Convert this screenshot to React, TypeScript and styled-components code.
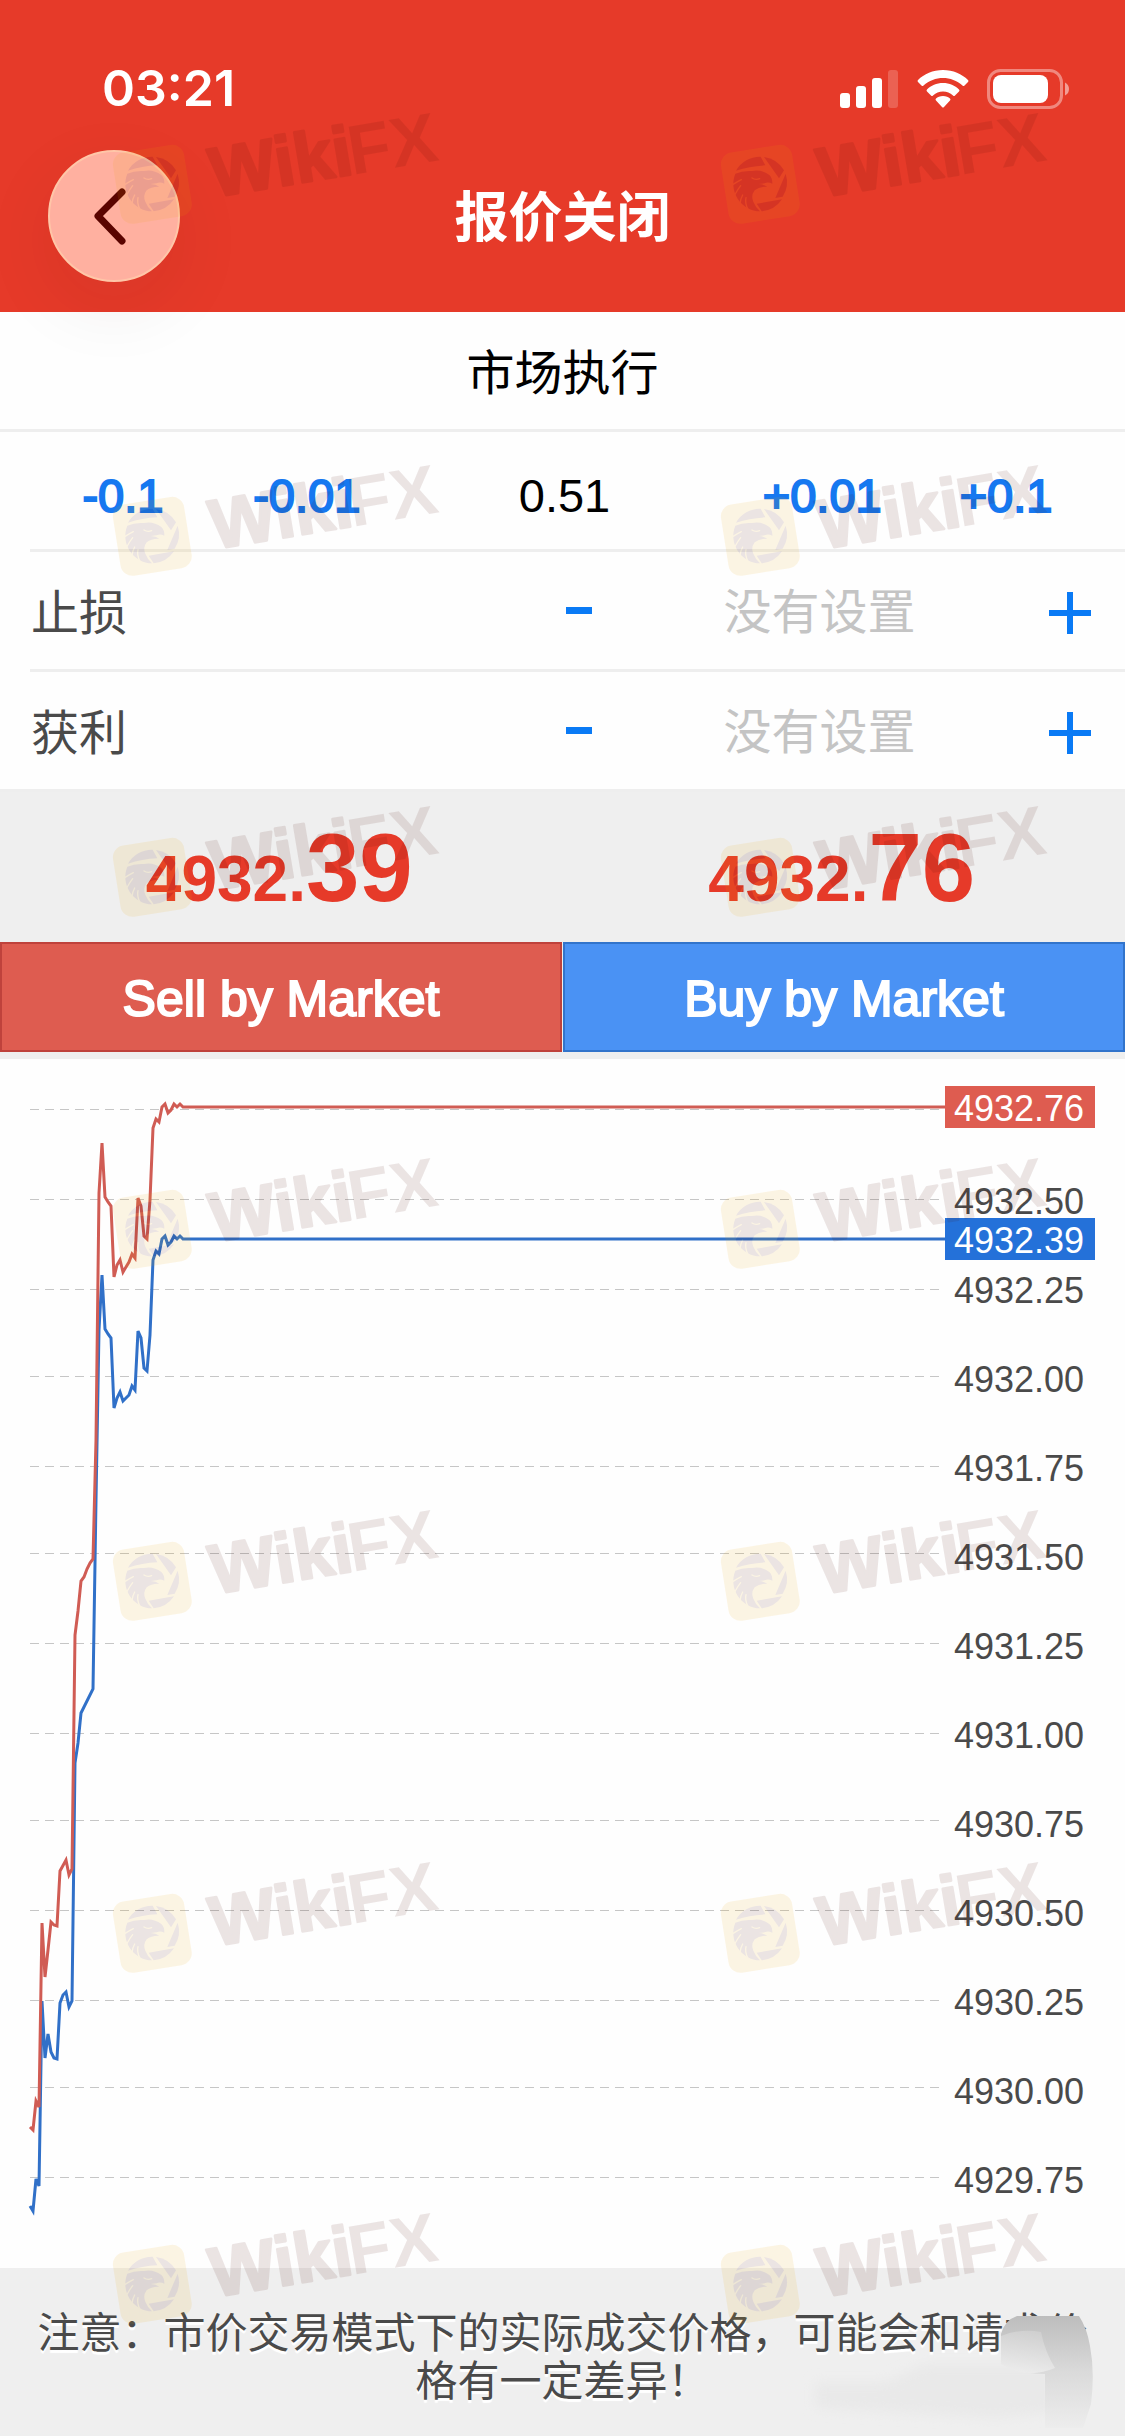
import React from "react";
import styled, { createGlobalStyle } from "styled-components";

const latin = `"Liberation Sans", "Noto Sans CJK SC", sans-serif`;
const cjk = `"Noto Sans CJK SC", "Liberation Sans", sans-serif`;

const GlobalStyle = createGlobalStyle`
  *, *::before, *::after { box-sizing: border-box; }
  body { margin: 0; background: #fefefe; }
  button, input { font: inherit; color: inherit; margin: 0; padding: 0; border: 0; background: none; }
  button { cursor: pointer; }
  input { outline: none; }
`;

const Page = styled.div`
  position: relative;
  overflow: hidden;
  width: 100%;
  display: flex;
  flex-direction: column;
  font-family: ${latin};
  color: #000;
`;

/* ---------- header ---------- */

const Header = styled.header`
  background: #e63a29;
  color: #fff;
  padding-top: 57px;
`;

const StatusBar = styled.div`
  height: 63px;
  padding: 0 54px 0 102px;
  display: flex;
  align-items: center;
  justify-content: space-between;
`;

const Clock = styled.time`
  font: 600 50px/63px Inter, sans-serif;
`;

const StatusIcons = styled.div`
  display: flex;
  align-items: center;
  gap: 18px;
`;

const NavBar = styled.nav`
  height: 192px;
  padding: 0 48px;
  display: grid;
  grid-template-columns: 1fr auto 1fr;
  align-items: center;
`;

const BackButton = styled.button`
  width: 132px;
  height: 132px;
  border-radius: 50%;
  border: 2px solid #ffc6a8;
  background: #ffb0a0;
  box-shadow: 0 24px 72px rgba(60, 30, 30, 0.08);
  display: grid;
  place-items: center;
`;

const Title = styled.h1`
  margin: 0;
  padding-bottom: 4px;
  font: 600 54px/72px ${cjk};
`;

/* ---------- order form ---------- */

const Form = styled.form`
  display: flex;
  flex-direction: column;
`;

const Row = styled.div`
  height: 120px;
  border-bottom: 3px solid #eeeeee;
  display: grid;
  align-items: center;
`;

const ModeRow = styled(Row)`
  justify-items: center;
  padding-bottom: 4px;
  font: 400 48px/72px ${cjk};
`;

const LotRow = styled(Row)`
  margin-left: 30px;
  padding: 9px 28px 0 2px;
  grid-template-columns: 182fr 186fr 330fr 186fr 182fr;
`;

const LevelRow = styled(Row)<{ $last: boolean }>`
  margin-left: ${(p) => (p.$last ? "0" : "30px")};
  padding-left: ${(p) => (p.$last ? "31px" : "1px")};
  grid-template-columns: 503fr 90px 391fr 110px;
`;

const StepButton = styled.button`
  height: 100%;
  font-size: 47px;
  color: #1678f0;
  -webkit-text-stroke: 2px #1678f0;
`;

const IconButton = styled.button`
  height: 100%;
  display: grid;
  place-items: center;
  color: #0a7af5;
`;

const Field = styled.input`
  width: 100%;
  height: 72px;
  text-align: center;
  font-size: 47px;
`;

const LevelField = styled(Field)`
  padding-top: 4px;
  font-size: 48px;
  &::placeholder {
    color: #c4c4c4;
    opacity: 1;
    font-family: ${cjk};
  }
`;

const LevelLabel = styled.label`
  padding-bottom: 4px;
  font: 400 48px/72px ${cjk};
  color: #4a4a4a;
`;

const Quotes = styled.div`
  background: #efefef;
  height: 150px;
  display: grid;
  grid-template-columns: 1fr 1fr;
`;

const Quote = styled.output`
  display: flex;
  justify-content: center;
  align-items: baseline;
  padding: 22px 4px 0 0;
  color: #e63a29;
  font: 700 64px/108px "Liberation Sans Narrow", "Arial Narrow", "Liberation Sans", sans-serif;
`;

const Pips = styled.span`
  font-size: 96px;
`;

const Actions = styled.div`
  background: #efefef;
  display: grid;
  grid-template-columns: 1fr 1fr;
  gap: 1px;
  padding-bottom: 7px;
`;

const TradeButton = styled.button<{ $side: "sell" | "buy" }>`
  height: 110px;
  padding-top: 4px;
  font-size: 50px;
  color: #fff;
  -webkit-text-stroke: 2px #fff;
  background: ${(p) => (p.$side === "sell" ? "#de5c50" : "#4a92f4")};
  border: 2px solid ${(p) => (p.$side === "sell" ? "#bf423c" : "#3274cb")};
`;

/* ---------- chart ---------- */

const Chart = styled.section`
  position: relative;
  display: grid;
  grid-template-columns: 1fr 180px;
  background: #fefefe;
`;

const Plot = styled.svg`
  display: block;
  width: 100%;
  height: 1209px;
`;

const Axis = styled.ol`
  list-style: none;
  margin: 0;
  padding: 98px 0 0 9px;
  font-size: 36px;
  line-height: 89px;
  color: #4a4a4a;
`;

const Tag = styled.output<{ $top: number; $side: "sell" | "buy" }>`
  position: absolute;
  right: 30px;
  top: ${(p) => p.$top}px;
  width: 150px;
  height: 42px;
  padding-left: 9px;
  font-size: 36px;
  line-height: 46px;
  color: #fff;
  background: ${(p) => (p.$side === "sell" ? "#de5c50" : "#2471d9")};
`;

/* ---------- footer ---------- */

const Footer = styled.footer`
  position: relative;
  background: #efefef;
  padding: 38px 36px 34px;
`;

const Note = styled.p`
  margin: 0;
  text-align: center;
  font: 400 42px/48px ${cjk};
  color: #4a4a4a;
  text-shadow: 0 3px 1px #fff;
`;

const Smudge = styled.svg`
  position: absolute;
  right: 30px;
  bottom: 0;
`;

/* ---------- watermark ---------- */

const Watermarks = styled.div`
  position: absolute;
  inset: 0;
  pointer-events: none;
`;

const Mark = styled.svg<{ $x: number; $y: number }>`
  position: absolute;
  left: ${(p) => p.$x}px;
  top: ${(p) => p.$y}px;
  width: 360px;
  height: 160px;
  opacity: 0.1;
`;

const markColumns = [100, 708];
const markRows = [83, 435, 776, 1128, 1480, 1832, 2183];

const DARK = "#4a0a00";
const GOLD = "#eba500";

function WikiMark({ x, y }: { x: number; y: number }) {
  return (
    <Mark $x={x} $y={y} viewBox="0 0 1080 480">
      <rect x="49" y="196" width="216" height="216" rx="36" fill={GOLD} transform="rotate(-9 157 304)" />
      <g fill={DARK}>
        <path d="M84 263 A82 82 0 0 1 158 221 L172 247 Q126 249 84 263Z" />
        <path d="M168 222 A82 82 0 0 1 228 262 L213 286Z" />
        <path d="M233 272 A82 82 0 0 1 224 341 L202 345Z" />
        <path d="M222 349 A82 82 0 0 1 161 385 L146 362Z" />
        <path d="M82 272 Q104 262 132 264 Q160 258 184 276 Q194 286 193 302 Q180 296 170 301 L152 303 Q168 304 178 311 Q154 310 140 322 Q128 338 136 356 Q142 372 156 385 A82 82 0 0 1 82 272Z" />
      </g>
      <g fill="none" stroke={GOLD} strokeWidth="4" strokeLinecap="round">
        <path d="M132 285 Q142 292 155 287" />
        <path d="M74 305 Q88 296 100 290" />
        <path d="M80 336 Q90 318 98 308" />
        <path d="M96 362 Q98 346 104 336" />
        <path d="M120 380 Q110 360 114 344" />
      </g>
      <g transform="rotate(-9.5 372 342)" fill={DARK} fontFamily="Liberation Sans, sans-serif" fontWeight="700" fontSize="210">
        <text x="342" y="338" stroke={DARK} strokeWidth="8" strokeLinejoin="round">
          Wiki
        </text>
        <text x="762" y="340">
          FX
        </text>
      </g>
    </Mark>
  );
}

/* ---------- data ---------- */

const gridLines = [1109, 1199, 1289, 1376, 1466, 1553, 1643, 1733, 1820, 1910, 2000, 2087, 2177];

const axisLabels = [
  "4932.50", "4932.25", "4932.00", "4931.75", "4931.50", "4931.25",
  "4931.00", "4930.75", "4930.50", "4930.25", "4930.00", "4929.75",
];

const askPoints =
  "30,2127 33,2130 36,2101 39,2107 42,1923 45,1977 48,1950 51,1922 54,1925 57,1926 60,1871 66,1860 69,1875 72,1869 75,1635 78,1611 81,1581 84,1577 87,1569 90,1563 93,1559 96,1440 99,1193 102,1143 105,1197 108,1202 111,1206 114,1277 117,1265 120,1260 123,1272 126,1267 129,1262 132,1254 135,1258 138,1198 141,1206 144,1236 147,1239 150,1200 153,1128 156,1119 159,1122 162,1107 165,1104 168,1113 171,1110 174,1104 177,1107 180,1104 183,1107 945,1107";

const bidPoints =
  "30,2206 33,2211 36,2179 39,2186 42,2001 45,2058 48,2034 51,2052 54,2058 57,2059 60,2003 63,1995 66,1992 69,2007 72,2001 75,1763 78,1743 81,1713 93,1689 96,1500 99,1330 102,1275 105,1329 108,1334 111,1338 114,1408 117,1398 120,1392 123,1401 126,1398 129,1395 132,1386 135,1390 138,1331 141,1338 144,1368 147,1371 150,1335 153,1260 156,1251 159,1254 162,1239 165,1236 168,1245 171,1242 174,1236 177,1239 180,1236 183,1239 945,1239";

const levels = [
  { id: "stop-loss", label: "止损" },
  { id: "take-profit", label: "获利" },
];

const MinusIcon = () => (
  <svg width="26" height="42" viewBox="0 0 26 42" aria-hidden="true">
    <rect x="0" y="17" width="26" height="7" fill="currentColor" />
  </svg>
);

const PlusIcon = () => (
  <svg width="44" height="48" viewBox="0 0 44 48" aria-hidden="true">
    <path d="M22 5V47M1 26H43" stroke="currentColor" strokeWidth="6" />
  </svg>
);

export default function App() {
  return (
    <Page>
      <GlobalStyle />
      <Header>
        <StatusBar>
          <Clock>03:21</Clock>
          <StatusIcons>
            <svg width="60" height="40" viewBox="0 0 60 40" fill="#fff" aria-hidden="true">
              <rect x="1" y="24" width="10" height="15" rx="3" />
              <rect x="17" y="17" width="10" height="22" rx="3" />
              <rect x="33" y="9" width="10" height="30" rx="3" />
              <rect x="49" y="1" width="10" height="38" rx="3" opacity="0.2" />
            </svg>
            <svg width="52" height="40" viewBox="0 0 52 40" fill="#fff" aria-hidden="true">
              <path d="M26 1C36 1 45 5 51 11Q52 12 51 13L47.500 16.500Q46.500 17.500 45.500 16.500C40 11.500 33 9 26 9S12 11.500 6.500 16.500Q5.500 17.500 4.500 16.500L1 13Q0 12 1 11C7 5 16 1 26 1Z" />
              <path d="M26 14C32.500 14 38 16.500 42 20.500Q43 21.500 42 22.500L38 26.500Q37 27.500 36 26.500C33 24 30 22.500 26 22.500S19 24 16 26.500Q15 27.500 14 26.500L10 22.500Q9 21.500 10 20.500C14 16.500 19.500 14 26 14Z" />
              <path d="M26 27C29 27 31.500 28 33 29.500Q34 30.500 33 31.500L27 38Q26 39 25 38L19 31.500Q18 30.500 19 29.500C20.500 28 23 27 26 27Z" />
            </svg>
            <svg width="84" height="40" viewBox="0 0 84 40" fill="none" aria-hidden="true">
              <rect x="1.500" y="1.500" width="73" height="37" rx="12" stroke="#fff" strokeOpacity="0.4" strokeWidth="3" />
              <rect x="6" y="6" width="55" height="28" rx="8" fill="#fff" />
              <path d="M78 13.500Q82 15.500 82 20T78 26.500Z" fill="#fff" fillOpacity="0.5" />
            </svg>
          </StatusIcons>
        </StatusBar>
        <NavBar>
          <BackButton type="button" aria-label="返回">
            <svg width="40" height="60" viewBox="0 0 40 60" fill="none" aria-hidden="true">
              <path d="M28 6L4 30L28 55" stroke="#5a0400" strokeWidth="7" strokeLinecap="round" strokeLinejoin="round" />
            </svg>
          </BackButton>
          <Title>报价关闭</Title>
        </NavBar>
      </Header>

      <Form onSubmit={(e) => e.preventDefault()}>
        <ModeRow>市场执行</ModeRow>
        <LotRow>
          <StepButton type="button">-0.1</StepButton>
          <StepButton type="button">-0.01</StepButton>
          <Field aria-label="手数" defaultValue="0.51" />
          <StepButton type="button">+0.01</StepButton>
          <StepButton type="button">+0.1</StepButton>
        </LotRow>
        {levels.map((level, i) => (
          <LevelRow key={level.id} $last={i === levels.length - 1}>
            <LevelLabel htmlFor={level.id}>{level.label}</LevelLabel>
            <IconButton type="button" aria-label={`${level.label} -`}>
              <MinusIcon />
            </IconButton>
            <LevelField id={level.id} placeholder="没有设置" />
            <IconButton type="button" aria-label={`${level.label} +`}>
              <PlusIcon />
            </IconButton>
          </LevelRow>
        ))}
        <Quotes>
          <Quote>
            4932.<Pips>39</Pips>
          </Quote>
          <Quote>
            4932.<Pips>76</Pips>
          </Quote>
        </Quotes>
        <Actions>
          <TradeButton type="button" $side="sell">Sell by Market</TradeButton>
          <TradeButton type="button" $side="buy">Buy by Market</TradeButton>
        </Actions>
      </Form>

      <Chart>
        <Plot viewBox="0 1059 945 1209" preserveAspectRatio="none" role="img" aria-label="4932.39 / 4932.76">
          {gridLines.map((y) => (
            <path key={y} d={`M30 ${y + 0.5}H940`} stroke="#c6c6c6" strokeWidth="1" strokeDasharray="9 6" />
          ))}
          <polyline points={bidPoints} fill="none" stroke="#3070c8" strokeWidth="3" />
          <polyline points={askPoints} fill="none" stroke="#d05c54" strokeWidth="3" />
        </Plot>
        <Axis>
          {axisLabels.map((label) => (
            <li key={label}>{label}</li>
          ))}
        </Axis>
        <Tag $top={27} $side="sell">4932.76</Tag>
        <Tag $top={159} $side="buy">4932.39</Tag>
      </Chart>

      <Footer>
        <Note>注意：市价交易模式下的实际成交价格，可能会和请求价格有一定差异！</Note>
        <Smudge width="300" height="124" viewBox="0 0 300 124" aria-hidden="true">
          <defs>
            <linearGradient id="blob" x1="0" y1="0" x2="0" y2="1">
              <stop offset="0" stopColor="#bdbdbd" />
              <stop offset="0.5" stopColor="#dadada" />
              <stop offset="1" stopColor="#ededed" />
            </linearGradient>
            <linearGradient id="fold" x1="0.6" y1="0" x2="0.4" y2="1">
              <stop offset="0" stopColor="#cfcfcf" />
              <stop offset="1" stopColor="#ececec" />
            </linearGradient>
            <filter id="soft" x="-10%" y="-20%" width="120%" height="140%">
              <feGaussianBlur stdDeviation="6" />
            </filter>
          </defs>
          <path d="M20 70H90L130 52H260V100L200 106L20 96Z" fill="#e9e9e9" filter="url(#soft)" />
          <path d="M222 4H284Q292 16 295 34Q300 60 296 92L288 116H250V62Q224 62 206 50V22Q210 8 222 4Z" fill="url(#blob)" />
          <path d="M206 24Q226 16 246 20Q250 40 260 56Q232 68 206 52Z" fill="url(#fold)" />
        </Smudge>
      </Footer>

      <Watermarks aria-hidden="true">
        {markRows.map((y) => markColumns.map((x) => <WikiMark key={`${x}-${y}`} x={x} y={y} />))}
      </Watermarks>
    </Page>
  );
}
